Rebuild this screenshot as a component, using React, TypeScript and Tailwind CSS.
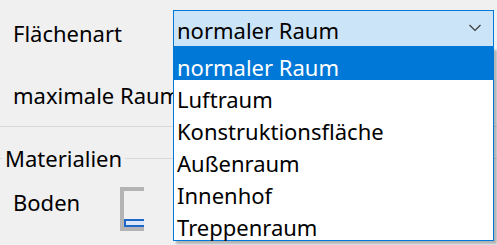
export default function App() {
  const items = ['normaler Raum', 'Luftraum', 'Konstruktionsfläche', 'Außenraum', 'Innenhof', 'Treppenraum'];

  return (
    <div className="relative w-[497px] h-[245px] overflow-hidden bg-[#f0f0f0] text-[22px] leading-none text-black [font-family:'Noto_Sans',sans-serif]">
      {/* Flächenart row */}
      <div className="flex pt-[10px]">
        <div className="w-[173px] pl-[13px] pt-[12px]">Flächenart</div>
        <div className="flex h-[37px] w-[321px] items-center justify-between border border-[#0078d7] bg-[#cce4f7] pl-[3px] pr-[12px]">
          <span className="pt-[2px]">normaler Raum</span>
          <svg width="12" height="8" viewBox="0 0 12 8" className="mb-[1px]">
            <path d="M0.5 1 L6 6.5 L11.5 1" fill="none" stroke="#3a3a3a" strokeWidth="1.2" />
          </svg>
        </div>
      </div>

      {/* maximale Raumhöhe row, partly hidden behind the open list */}
      <div className="w-[173px] overflow-hidden whitespace-nowrap pl-[13px] pt-[37px]">maximale Raumhöhe</div>

      <div className="mt-[20px] h-px bg-[#d9d9d9]" />

      {/* Materialien group */}
      <div className="mt-[31px] border-t border-[#d9d9d9] pl-[2px]">
        <div className="-mt-[12px] w-fit bg-[#f0f0f0] px-[3px]">Materialien</div>
        <div className="flex items-start pt-[18px]">
          <div className="w-[118px] pl-[11px] pt-[4px]">Boden</div>
          <div className="flex h-[44px] w-[24px] flex-col justify-end border-[4px] border-r-0 border-[#b4b4b4]">
            <div className="h-[8px] border-[2px] border-r-0 border-[#1e66c8] bg-[#dbe8f7]" />
          </div>
        </div>
      </div>

      {/* open dropdown list */}
      <div className="absolute left-[173px] top-[47px] w-[321px] border border-[#0078d7] bg-white shadow-[3px_3px_2px_rgba(0,0,0,0.25)]">
        {items.map((item, i) => (
          <div
            key={item}
            className={`flex h-[32px] items-center pl-[3px] pt-[5px] ${i === 0 ? 'bg-[#0078d7] text-white' : ''}`}
          >
            {item}
          </div>
        ))}
      </div>
    </div>
  );
}
